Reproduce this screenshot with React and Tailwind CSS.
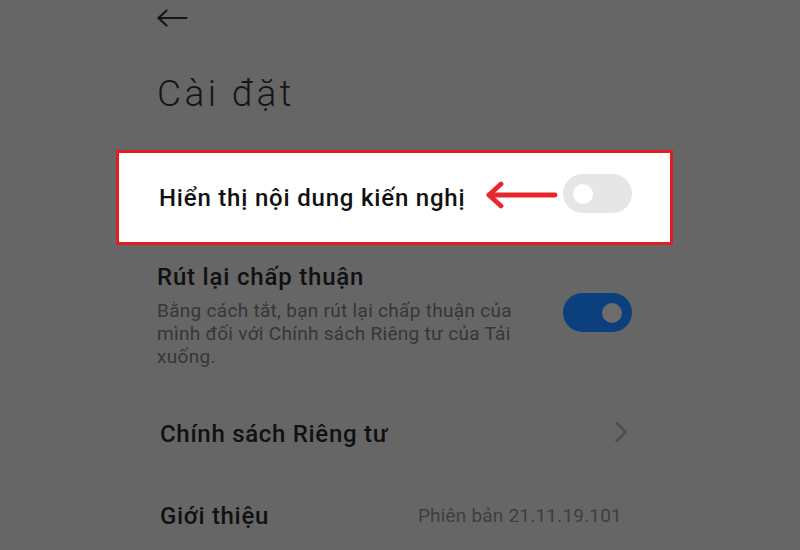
import React from 'react'

function Toggle({ on }) {
  return (
    <div
      className={`flex h-[39px] w-[69px] shrink-0 items-center rounded-full px-[10px] ${
        on ? 'justify-end bg-[#0b3f7d]' : 'justify-start bg-[#e6e6e6]'
      }`}
    >
      <div className={`h-[20px] w-[20px] rounded-full ${on ? 'bg-[#6d6d6d]' : 'bg-white'}`} />
    </div>
  )
}

export default function App() {
  return (
    <div className="h-[550px] w-[800px] overflow-hidden bg-[#666666] font-['Roboto',sans-serif] text-[#111111]">
      <div className="ml-[157px] w-[475px]">
        {/* back */}
        <div className="pt-[9px]">
          <svg width="31" height="18" viewBox="0 0 31 18" fill="none" stroke="#161616" strokeWidth="2.2" strokeLinecap="round" strokeLinejoin="round">
            <path d="M1.5 9H29.5" />
            <path d="M9.5 1.5L1.5 9L9.5 16.5" />
          </svg>
        </div>

        <h1 className="mt-[45px] text-[37px] font-light leading-[44px] tracking-[3.4px] text-[#161616]">Cài đặt</h1>

        {/* highlighted row */}
        <div className="-mx-[41px] mt-[34px] flex h-[95px] items-center border-[3px] border-[#e11d24] bg-white pl-[40px] pr-[38px]">
          <span className="text-[24px] font-medium leading-[28px] tracking-[0.8px]">Hiển thị nội dung kiến nghị</span>
          <svg className="ml-auto mb-[6px]" width="72" height="28" viewBox="0 0 72 28" fill="none" stroke="#e8282d" strokeWidth="4.8" strokeLinecap="round" strokeLinejoin="round">
            <path d="M3 14H69" />
            <path d="M15 3L3 14L15 25" />
          </svg>
          <div className="ml-[5px] mb-[8px]">
            <Toggle on={false} />
          </div>
        </div>

        {/* withdraw consent */}
        <div className="mt-[18px] flex items-start justify-between">
          <div className="w-[372px]">
            <div className="text-[24px] font-medium leading-[28px] tracking-[0.8px]">Rút lại chấp thuận</div>
            <p className="mt-[8px] text-[19px] leading-[23px] tracking-[0.3px] text-[#363636]">
              Bằng cách tắt, bạn rút lại chấp thuận của mình đối với Chính sách Riêng tư của Tải xuống.
            </p>
          </div>
          <div className="mt-[30px]">
            <Toggle on />
          </div>
        </div>

        {/* privacy policy */}
        <div className="mt-[52px] flex h-[28px] items-center justify-between pl-[3px]">
          <span className="text-[24px] font-medium leading-[28px] tracking-[0.7px]">Chính sách Riêng tư</span>
          <svg className="-mt-[5px] mr-[4px]" width="14" height="22" viewBox="0 0 14 22" fill="none" stroke="#4c4c4c" strokeWidth="2.4" strokeLinecap="round" strokeLinejoin="round">
            <path d="M2.5 2L11.5 11L2.5 20" />
          </svg>
        </div>

        {/* about */}
        <div className="mt-[54px] flex h-[28px] items-center justify-between pl-[3px]">
          <span className="text-[24px] font-medium leading-[28px] tracking-[0.7px]">Giới thiệu</span>
          <span className="mr-[10px] text-[19px] leading-[28px] tracking-[0.2px] text-[#3e3e3e]">Phiên bản 21.11.19.101</span>
        </div>
      </div>
    </div>
  )
}
